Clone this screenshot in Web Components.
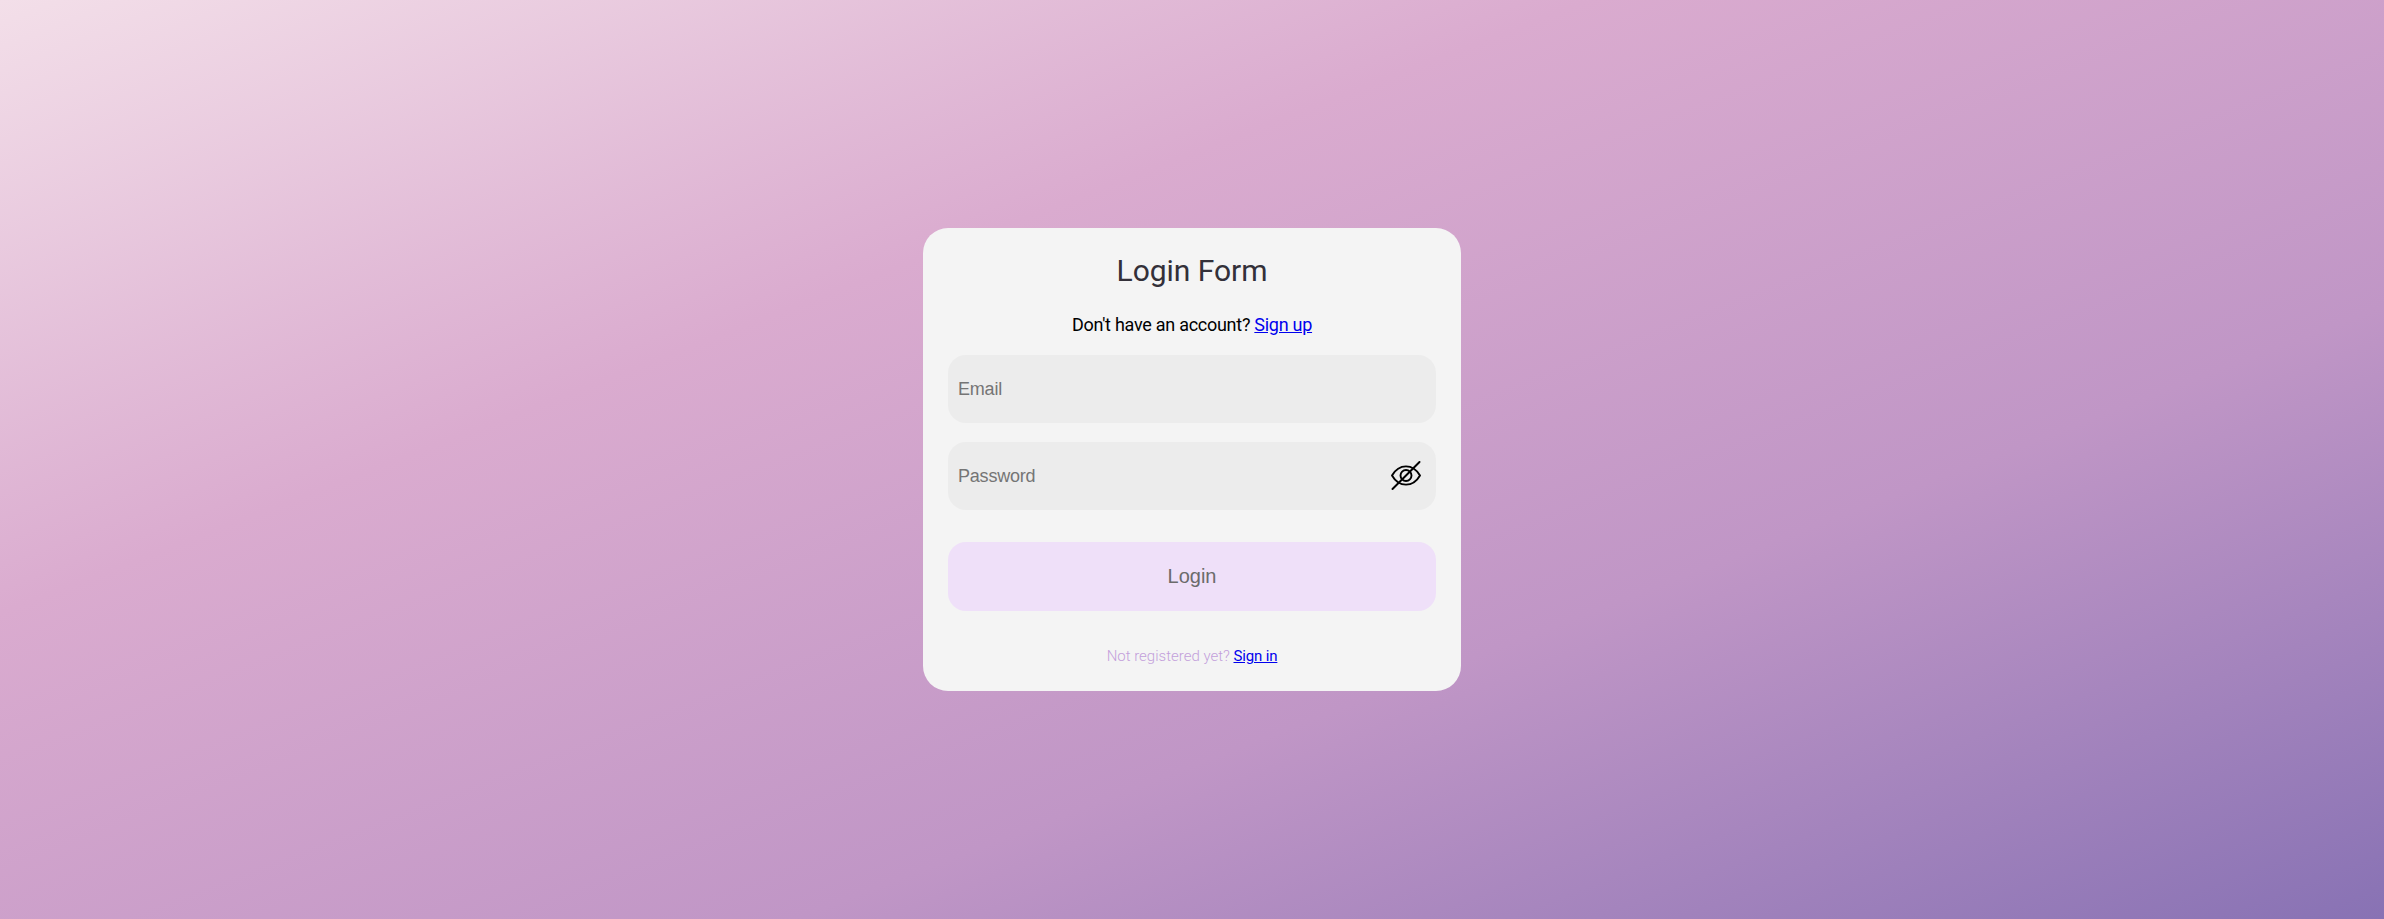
<!DOCTYPE html>
<html lang="en">
<head>
<meta charset="utf-8">
<title>Login Form</title>
<style>
html, body { margin: 0; height: 100%; }
body { font-family: Roboto, "Liberation Sans", sans-serif; }
</style>
</head>
<body>
<login-page>
  <login-card>
    <form-field label="Email" type="email"></form-field>
    <form-field label="Password" type="password"><eye-icon></eye-icon></form-field>
    <login-button slot="action">Login</login-button>
  </login-card>
</login-page>
<script>
const define = (name, html) => customElements.define(name, class extends HTMLElement {
  constructor() {
    super();
    this.attachShadow({ mode: 'open' }).innerHTML = html;
  }
});

define('login-page', `<style>
:host { display: flex; align-items: center; justify-content: center; height: 100vh;
  background: linear-gradient(to bottom right, #f3dfe9, #daabcf, #c096c6, #8872b4); }
</style><slot></slot>`);

define('login-card', `<style>
:host { display: flex; flex-direction: column; box-sizing: border-box; width: 538px; height: 463px;
  padding: 25px; border-radius: 25px; background: #f4f4f4; text-align: center; }
h1 { margin: 0; font-size: 30px; font-weight: 400; line-height: 36px; color: #333039; letter-spacing: -0.03px; }
.signup { margin: 26px 0 20px; font-size: 18px; line-height: 20px; color: #000; letter-spacing: -0.27px; }
.fields { display: flex; flex-direction: column; gap: 19px; }
.action { margin-top: 32px; }
.signin { margin: 36px 0 0; font-size: 15px; line-height: 18px; font-weight: 300; color: #c39fdb; }
a { color: #0000ee; }
.signin a { font-weight: 400; letter-spacing: -0.15px; }
</style>
<h1>Login Form</h1>
<p class="signup">Don't have an account? <a href="#">Sign up</a></p>
<div class="fields"><slot></slot></div>
<div class="action"><slot name="action"></slot></div>
<p class="signin">Not registered yet? <a href="#">Sign in</a></p>`);

customElements.define('form-field', class extends HTMLElement {
  constructor() {
    super();
    this.attachShadow({ mode: 'open' }).innerHTML = `<style>
:host { display: flex; align-items: center; box-sizing: border-box; height: 68px; padding: 0 15px 0 10px;
  border-radius: 18px; background: #ececec; }
input { flex: 1; min-width: 0; margin: 0; padding: 0; border: 0; outline: 0; background: none;
  font: 18px "Liberation Sans", Arial, sans-serif; letter-spacing: -0.2px; }
input::placeholder { color: #757575; }
</style><input><slot></slot>`;
    const input = this.shadowRoot.querySelector('input');
    input.type = this.getAttribute('type');
    input.placeholder = this.getAttribute('label');
  }
});

define('eye-icon', `<style>:host { display: block; width: 30px; height: 30px; } svg { display: block; }</style>
<svg width="30" height="30" viewBox="0 0 30 30" fill="none" stroke="#000" stroke-width="1.9" stroke-linecap="round">
<path d="M1 14.5C8 2.3 22 2.3 29 14.5C22 26.7 8 26.7 1 14.5Z" stroke-linejoin="round"/><circle cx="15" cy="14.5" r="5.5"/><path d="M1.5 28L28.5 1"/></svg>`);

define('login-button', `<style>
:host { display: block; }
button { display: block; width: 100%; height: 69px; padding: 0; border: 0; border-radius: 18px;
  background: #efe0f9; color: #6b6b6b; font: 20px "Liberation Sans", Arial, sans-serif; }
</style><button type="button"><slot></slot></button>`);
</script>
</body>
</html>
